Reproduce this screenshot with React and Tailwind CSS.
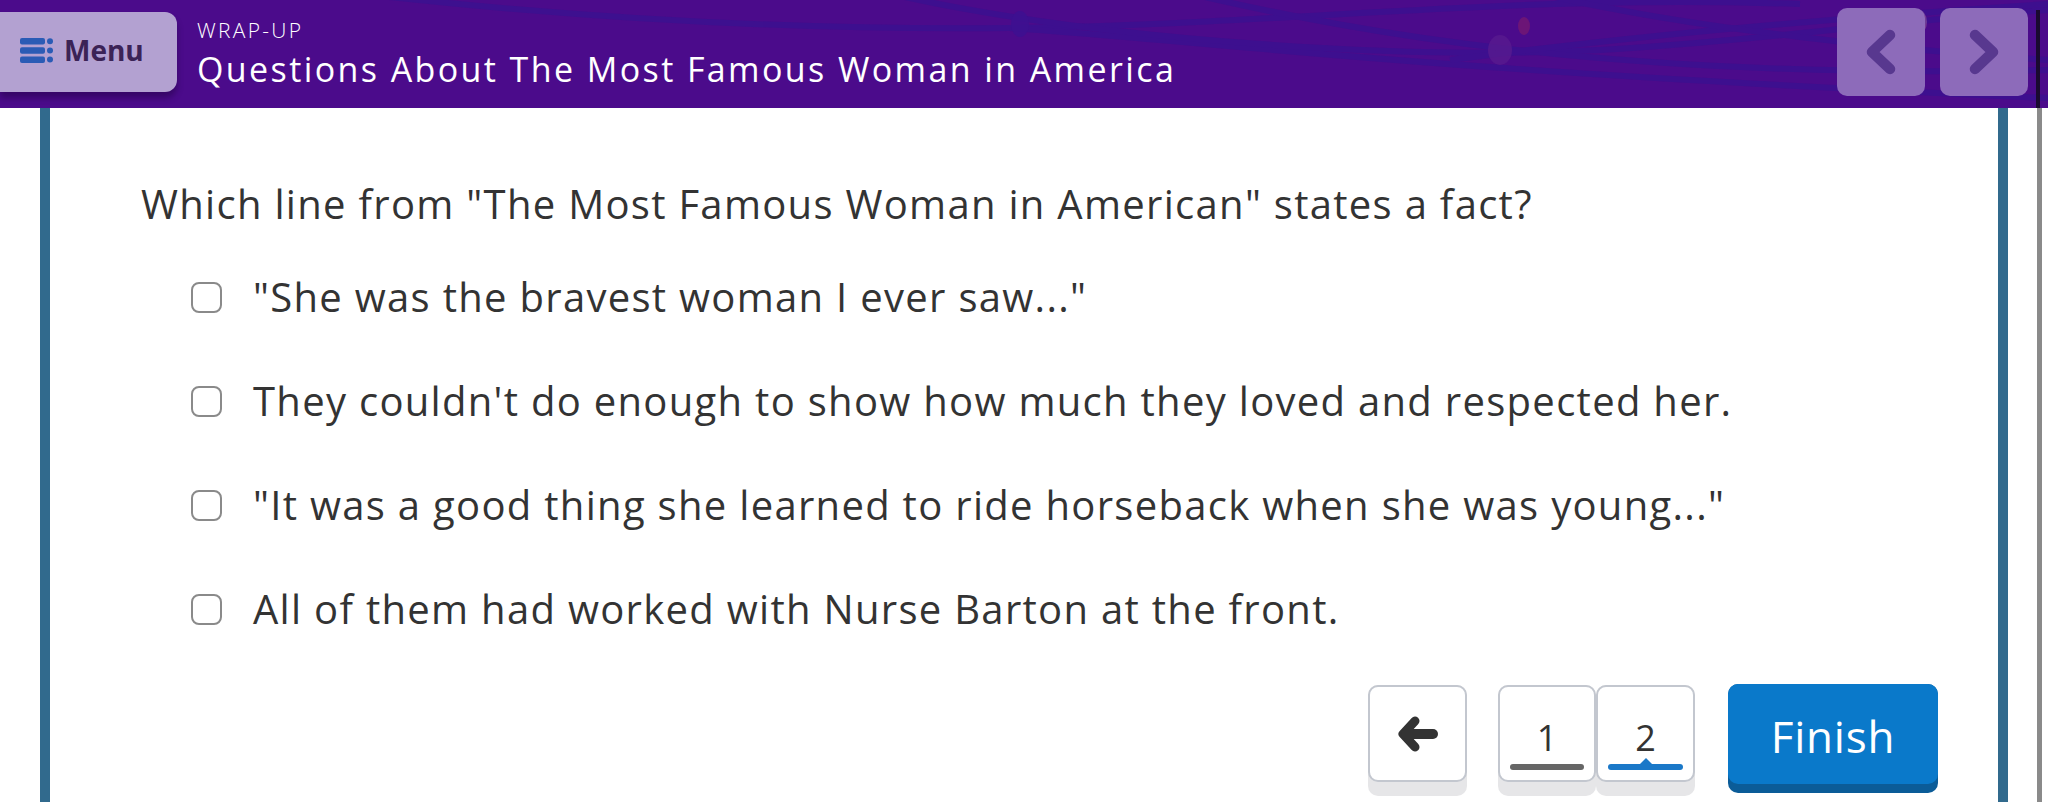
import React from "react";

const font = { fontFamily: '"Open Sans", "Noto Sans", sans-serif' };

function MenuIcon() {
  return (
    <svg width="33" height="27" viewBox="0 0 33 27">
      <rect x="0" y="1" width="25" height="6.5" rx="2" fill="#2a5bb5" />
      <rect x="0" y="10.2" width="25" height="6.5" rx="2" fill="#2a5bb5" />
      <rect x="0" y="19.4" width="25" height="6.5" rx="2" fill="#2a5bb5" />
      <circle cx="30" cy="4.2" r="3" fill="#2a5bb5" />
      <circle cx="30" cy="13.4" r="3" fill="#2a5bb5" />
      <circle cx="30" cy="22.6" r="3" fill="#2a5bb5" />
    </svg>
  );
}

function Chevron({ dir }) {
  return (
    <svg width="36" height="48" viewBox="0 0 36 48">
      <path
        d={dir === "left" ? "M27 7 L9 24 L27 41" : "M9 7 L27 24 L9 41"}
        fill="none"
        stroke="#58388f"
        strokeWidth="10.5"
        strokeLinecap="round"
        strokeLinejoin="round"
      />
    </svg>
  );
}

function BackArrow() {
  return (
    <svg width="42" height="38" viewBox="0 0 42 38">
      <path
        d="M18 6 L6 19 L18 32"
        fill="none"
        stroke="#333333"
        strokeWidth="9"
        strokeLinecap="round"
        strokeLinejoin="round"
      />
      <path d="M9 19 L36 19" fill="none" stroke="#333333" strokeWidth="10" strokeLinecap="round" />
    </svg>
  );
}

function HeaderDecor() {
  return (
    <svg
      className="absolute inset-0 pointer-events-none"
      width="2048"
      height="108"
      viewBox="0 0 2048 108"
    >
      <g fill="none" stroke="#3a1190" strokeWidth="6" opacity="0.8">
        <path d="M380 -4 C 600 20, 800 30, 1010 28 C 1300 24, 1500 -6, 1800 4" />
        <path d="M1010 28 C 1200 40, 1400 70, 2048 98" />
        <path d="M900 -4 C 1100 40, 1400 60, 1600 50 C 1750 42, 1900 20, 2048 10" />
        <path d="M1200 -4 C 1350 30, 1600 80, 2048 70" />
        <path d="M1450 60 C 1600 40, 1800 20, 2048 4" />
        <path d="M1550 -4 C 1700 30, 1900 50, 2048 60" />
      </g>
      <ellipse cx="1020" cy="24" rx="9" ry="13" fill="#3d1190" opacity="0.85" />
      <ellipse cx="1500" cy="50" rx="12" ry="15" fill="#571a8f" opacity="0.8" />
      <ellipse cx="1524" cy="26" rx="6" ry="9" fill="#7a1a6f" opacity="0.7" />
      <ellipse cx="1917" cy="22" rx="10" ry="13" fill="#a06aa0" opacity="0.5" />
    </svg>
  );
}

function Option({ text }) {
  return (
    <div className="flex items-center h-[48px]">
      <div className="w-[31px] h-[31px] rounded-[8px] border-[2.5px] border-[#8a8a8a] bg-white shrink-0" />
      <div className="ml-[31px] text-[40px] leading-[48px] text-[#333333] tracking-[1.3px] whitespace-nowrap">
        {text}
      </div>
    </div>
  );
}

export default function App() {
  return (
    <div
      className="w-[2048px] h-[802px] bg-white overflow-hidden flex flex-col"
      style={font}
    >
      <header className="relative h-[108px] shrink-0 bg-[#4b0b8b] flex items-start">
        <HeaderDecor />
        <div className="relative mt-[12px] w-[177px] h-[80px] rounded-r-[12px] bg-[#b3a1d1] shadow-[0_6px_6px_rgba(30,0,60,0.45)] flex items-center pl-[20px] pb-[4px] gap-[11px]">
          <MenuIcon />
          <span className="text-[28px] font-bold text-[#3b2356] leading-none">Menu</span>
        </div>
        <div className="relative ml-[20px] mt-[17px] flex flex-col">
          <span className="text-[21px] font-light text-white leading-[26px] tracking-[2.3px]">
            WRAP-UP
          </span>
          <span className="mt-[6px] text-[34px] font-medium text-white leading-[40px] tracking-[2.4px] whitespace-nowrap">
            Questions About The Most Famous Woman in America
          </span>
        </div>
        <div className="relative ml-auto mt-[8px] flex gap-[15px] mr-[20px]">
          <div className="w-[88px] h-[88px] rounded-[10px] bg-[#8d6bba] flex items-center justify-center">
            <Chevron dir="left" />
          </div>
          <div className="w-[88px] h-[88px] rounded-[10px] bg-[#8d6bba] flex items-center justify-center">
            <Chevron dir="right" />
          </div>
        </div>
        <div className="absolute right-[8px] top-[10px] w-[4px] h-[98px] bg-[#1a0a30]" />
      </header>

      <div className="flex flex-1 min-h-0">
        <div className="ml-[40px] w-[1968px] border-l-[10px] border-r-[10px] border-[#316a8d] bg-white flex flex-col">
          <div className="mt-[72px] pl-[91px] text-[40px] leading-[48px] text-[#333333] tracking-[1.3px] whitespace-nowrap">
            Which line from "The Most Famous Woman in American" states a fact?
          </div>
          <div className="mt-[45px] pl-[141px] flex flex-col gap-[56px]">
            <Option text={'"She was the bravest woman I ever saw..."'} />
            <Option text="They couldn't do enough to show how much they loved and respected her." />
            <Option text={'"It was a good thing she learned to ride horseback when she was young..."'} />
            <Option text="All of them had worked with Nurse Barton at the front." />
          </div>
          <div className="mt-[52px] flex justify-end items-start pr-[60px]">
            <div className="w-[99px] h-[111px] rounded-[10px] bg-[#e6e6e8]">
              <div className="w-[99px] h-[97px] rounded-[10px] border-2 border-[#c3c7cf] bg-white flex items-center justify-center">
                <BackArrow />
              </div>
            </div>
            <div className="ml-[31px] flex">
              <div className="w-[98px] h-[111px] rounded-[10px] bg-[#e6e6e8]">
                <div className="relative w-[98px] h-[97px] rounded-[10px] border-2 border-[#c3c7cf] bg-white flex items-start justify-center">
                  <span className="mt-[31px] text-[36px] leading-[40px] text-[#333333]">1</span>
                  <div className="absolute left-[10px] right-[10px] bottom-[10px] h-[6px] rounded-full bg-[#666666]" />
                </div>
              </div>
              <div className="w-[99px] h-[111px] rounded-[10px] bg-[#e6e6e8]">
                <div className="relative w-[99px] h-[97px] rounded-[10px] border-2 border-[#c3c7cf] bg-white flex items-start justify-center">
                  <span className="mt-[31px] text-[36px] leading-[40px] text-[#333333]">2</span>
                  <div className="absolute left-[10px] right-[10px] bottom-[10px] h-[6px] rounded-full bg-[#1a78c8]" />
                  <div className="absolute left-1/2 -translate-x-1/2 bottom-[15px] w-0 h-0 border-l-[7px] border-r-[7px] border-b-[7px] border-l-transparent border-r-transparent border-b-[#1a78c8]" />
                </div>
              </div>
            </div>
            <div className="ml-[33px] w-[210px] h-[109px] rounded-[10px] bg-[#0b5c98] -mt-[1px]">
              <div className="w-[210px] h-[100px] rounded-[10px] bg-[#0a79ca] flex items-center justify-center pt-[3px]">
                <span className="text-[44px] font-medium text-white leading-none tracking-[0.8px]">Finish</span>
              </div>
            </div>
          </div>
        </div>
        <div className="ml-[29px] w-[5px] bg-[#8a8a8a]" />
      </div>
    </div>
  );
}
